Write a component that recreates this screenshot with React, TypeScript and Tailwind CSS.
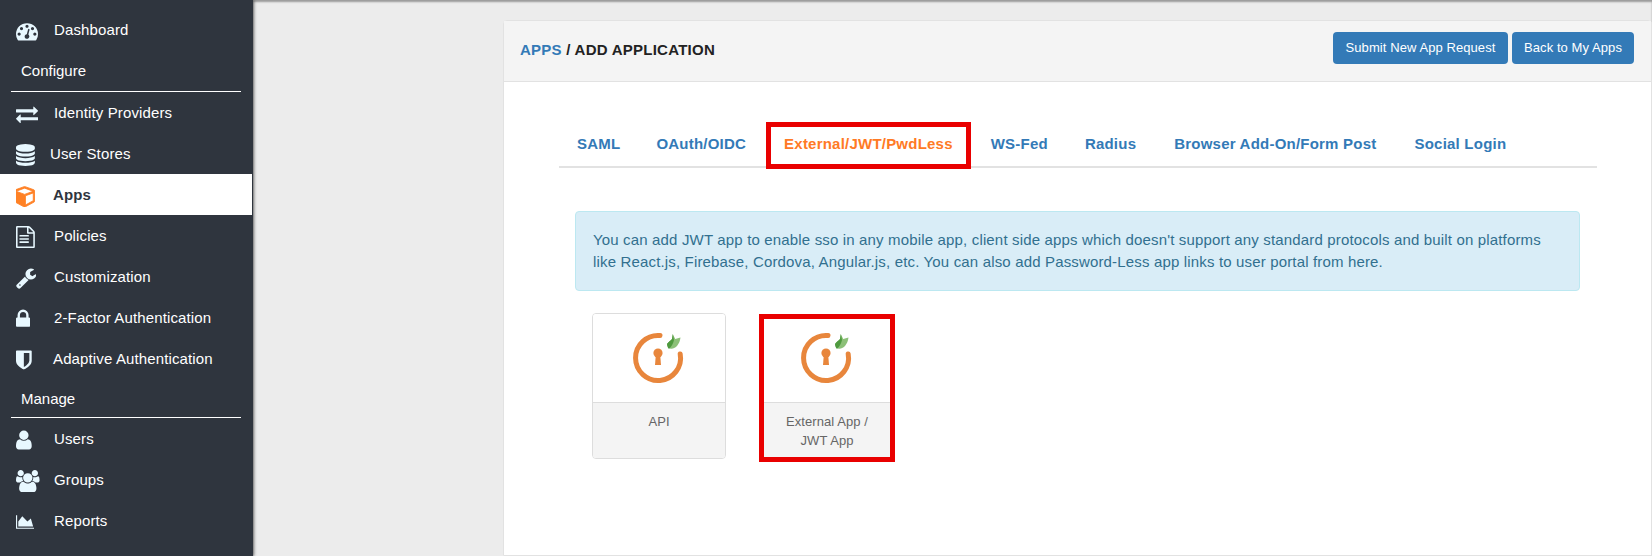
const icons = {
  dashboard: "M384 1152q0-53-37.500-90.500t-90.500-37.500-90.500 37.500-37.500 90.500 37.500 90.500 90.500 37.500 90.500-37.500 37.500-90.500zm192-448q0-53-37.500-90.500t-90.500-37.500-90.500 37.500-37.500 90.500 37.500 90.500 90.500 37.500 90.500-37.500 37.500-90.500zm428 481l101-382q6-26-7.500-48.500t-38.500-29.500-48 6.500-30 39.500l-101 382q-60 5-107 43.500t-63 98.500q-20 77 20 146t117 89 146-20 89-117q16-60-6-117t-72-91zm660-33q0-53-37.500-90.500t-90.500-37.500-90.500 37.500-37.500 90.500 37.500 90.500 90.500 37.500 90.500-37.500 37.500-90.500zm-640-640q0-53-37.500-90.500t-90.500-37.500-90.500 37.500-37.500 90.500 37.500 90.500 90.500 37.500 90.500-37.500 37.500-90.500zm448 192q0-53-37.500-90.500t-90.500-37.500-90.500 37.500-37.500 90.500 37.500 90.500 90.500 37.500 90.500-37.500 37.500-90.500zm320 448q0 261-141 483-19 29-54 29h-1402q-35 0-54-29-141-221-141-483 0-182 71-348t191-286 286-191 348-71 348 71 286 191 191 286 71 348z",
  exchange: "M1792 1184v192q0 13-9.500 22.500t-22.500 9.500h-1376v192q0 13-9.500 22.500t-22.500 9.500q-12 0-24-10l-319-320q-9-9-9-22 0-14 9-23l320-320q9-9 23-9 13 0 22.500 9.500t9.500 22.500v192h1376q13 0 22.500 9.500t9.500 22.500zm0-544q0 14-9 23l-320 320q-9 9-23 9-13 0-22.500-9.500t-9.500-22.500v-192h-1376q-13 0-22.500-9.500t-9.500-22.500v-192q0-13 9.500-22.500t22.500-9.500h1376v-192q0-14 9-23t23-9q12 0 24 10l319 319q9 9 9 23z",
  database: "M896 768q237 0 443-43t325-127v170q0 69-103 128t-280 93.500-385 34.500-385-34.500-280-93.500-103-128v-170q119 84 325 127t443 43zm0 768q237 0 443-43t325-127v170q0 69-103 128t-280 93.500-385 34.500-385-34.500-280-93.500-103-128v-170q119 84 325 127t443 43zm0-384q237 0 443-43t325-127v170q0 69-103 128t-280 93.500-385 34.500-385-34.500-280-93.500-103-128v-170q119 84 325 127t443 43zm0-1152q208 0 385 34.500t280 93.500 103 128v128q0 69-103 128t-280 93.500-385 34.500-385-34.500-280-93.500-103-128v-128q0-69 103-128t280-93.500 385-34.500z",
  cube: "M896 1629l640-349v-636l-640 233v752zm-64-865l698-254-698-254-698 254zm832-252v768q0 35-18 65t-49 47l-704 384q-28 16-61 16t-61-16l-704-384q-31-17-49-47t-18-65v-768q0-40 23-73t61-49l704-256q22-8 44-8t44 8l704 256q38 16 61 49t23 73z",
  file: "M1596 380q28 28 48 76t20 88v1152q0 40-28 68t-68 28h-1344q-40 0-68-28t-28-68v-1600q0-40 28-68t68-28h896q40 0 88 20t76 48zm-444-244v376h376q-10-29-22-41l-313-313q-12-12-41-22zm384 1528v-1024h-416q-40 0-68-28t-28-68v-416h-768v1536h1280zm-1128-896q0-14 9-23t23-9h704q14 0 23 9t9 23v64q0 14-9 23t-23 9h-704q-14 0-23-9t-9-23v-64zm736 224q14 0 23 9t9 23v64q0 14-9 23t-23 9h-704q-14 0-23-9t-9-23v-64q0-14 9-23t23-9h704zm0 256q14 0 23 9t9 23v64q0 14-9 23t-23 9h-704q-14 0-23-9t-9-23v-64q0-14 9-23t23-9h704z",
  wrench: "M448 1472q0-26-19-45t-45-19-45 19-19 45 19 45 45 19 45-19 19-45zm644-420l-682 682q-37 37-90 37-52 0-91-37l-106-108q-38-36-38-90 0-53 38-91l681-681q39 98 114.500 173.500t173.500 114.500zm634-435q0 39-23 106-47 134-164.500 217.500t-258.500 83.500q-185 0-316.500-131.500t-131.500-316.500 131.500-316.500 316.500-131.500q58 0 121.500 16.500t107.500 46.500q16 11 16 28t-16 28l-293 169v224l193 107q5-3 79-48.500t135.500-81 70.500-35.500q15 0 23.500 10t8.500 25z",
  lock: "M640 768h512v-192q0-106-75-181t-181-75-181 75-75 181v192zm832 96v576q0 40-28 68t-68 28h-960q-40 0-68-28t-28-68v-576q0-40 28-68t68-28h32v-192q0-184 132-316t316-132 316 132 132 316v192h32q40 0 68 28t28 68z",
  shield: "M1344 960v-640h-448v1137q119-63 213-137 235-184 235-360zm192-768v768q0 86-33.500 170.500t-83 150-118 127.500-126.500 103-121 77.500-89.500 49.500-42.500 20q-12 6-26 6t-26-6q-16-7-42.500-20t-89.500-49.500-121-77.500-126.500-103-118-127.500-83-150-33.500-170.500v-768q0-26 19-45t45-19h1152q26 0 45 19t19 45z",
  user: "M1536 1399q0 109-62.500 187t-150.500 78h-854q-88 0-150.500-78t-62.500-187q0-85 8.500-160.500t31.500-152 58.500-131 94-89 134.500-34.500q131 128 313 128t313-128q76 0 134.500 34.500t94 89 58.500 131 31.500 152 8.500 160.500zm-256-887q0 159-112.500 271.500t-271.500 112.500-271.500-112.500-112.500-271.500 112.500-271.500 271.500-112.500 271.500 112.500 112.500 271.500z",
  users: "M593 896q-162 5-265 128h-134q-82 0-138-40.500t-56-118.500q0-353 124-353 6 0 43.500 21t97.500 42.500 119 21.500q67 0 133-23-5 37-5 66 0 139 81 256zm1071 637q0 120-73 189.500t-194 69.500h-874q-121 0-194-69.500t-73-189.500q0-53 3.500-103.500t14-109 26.500-108.500 43-97.500 62-81 85.500-53.500 111.500-20q10 0 43 21.500t73 48 107 48 135 21.500 135-21.500 107-48 73-48 43-21.500q61 0 111.500 20t85.500 53.500 62 81 43 97.500 26.500 108.500 14 109 3.500 103.500zm-1024-1277q0 106-75 181t-181 75-181-75-75-181 75-181 181-75 181 75 75 181zm704 384q0 159-112.500 271.500t-271.500 112.500-271.500-112.500-112.500-271.500 112.500-271.500 271.500-112.500 271.500 112.500 112.500 271.500zm576 225q0 78-56 118.500t-138 40.500h-134q-103-123-265-128 81-117 81-256 0-29-5-66 66 23 133 23 59 0 119-21.500t97.500-42.500 43.500-21q124 0 124 353zm-128-609q0 106-75 181t-181 75-181-75-75-181 75-181 181-75 181 75 75 181z",
  area: "M2048 1536v128h-2048v-1536h128v1408h1920zm-384-1024l256 896h-1664v-576l448-576 576 576z",
  bars: "M640 896v512h-256v-512h256zm384-512v1024h-256v-1024h256zm1024 1152v128h-2048v-1536h128v1408h1920zm-640-896v768h-256v-768h256zm384-384v1152h-256v-1152h256z",
};

function Glyph({ d, view, className = "h-[22px] text-[#e8f8ff]" }: { d: string; view: string; className?: string }) {
  return (
    <svg viewBox={view} className={`w-auto ${className}`} fill="currentColor">
      <path d={d} />
    </svg>
  );
}

function NavItem({ d, view, label, active, iconClass, labelClass = "ml-[54px]" }: { d: string; view: string; label?: string; active?: boolean; iconClass?: string; labelClass?: string }) {
  return (
    <div className={`relative flex h-[41px] w-[252px] items-center pt-[2px] text-[15px] tracking-[0.13px] ${active ? "bg-white font-bold text-[#2f353e]" : "text-white"}`}>
      <span className="absolute left-4">
        <Glyph d={d} view={view} className={iconClass} />
      </span>
      {label && <span className={labelClass}>{label}</span>}
    </div>
  );
}

function Sidebar() {
  return (
    <aside className="h-[556px] w-[253px] shrink-0 overflow-hidden bg-[#2f353e] pt-[9px] shadow-[1px_0_3px_rgba(0,0,0,0.5)]">
      <NavItem d={icons.dashboard} view="0 0 1792 1792" label="Dashboard" />
      <div className="pt-[11px]">
        <div className="ml-[21px] text-[15px] leading-[20px] text-white">Configure</div>
        <div className="ml-[11px] mt-[10px] h-px w-[230px] bg-white" />
      </div>
      <NavItem d={icons.exchange} view="0 0 1792 1792" label="Identity Providers" />
      <NavItem d={icons.database} view="128 0 1536 1792" label="User Stores" labelClass="ml-[50px]" />
      <NavItem d={icons.cube} view="128 0 1536 1792" iconClass="h-[22px] stroke-current stroke-[70px] text-[#ff8125]" label="Apps" active labelClass="ml-[53px]" />
      <NavItem d={icons.file} view="128 0 1536 1792" label="Policies" />
      <NavItem d={icons.wrench} view="64 0 1664 1792" label="Customization" />
      <NavItem d={icons.lock} view="320 0 1152 1792" label="2-Factor Authentication" />
      <NavItem d={icons.shield} view="256 0 1280 1792" label="Adaptive Authentication" labelClass="ml-[53px]" />
      <div className="pt-[10px]">
        <div className="ml-[21px] text-[15px] leading-[20px] text-white">Manage</div>
        <div className="ml-[11px] mt-[8px] h-px w-[230px] bg-white" />
      </div>
      <NavItem d={icons.user} view="256 0 1280 1792" label="Users" />
      <NavItem d={icons.users} view="0 0 1920 1792" label="Groups" />
      <NavItem d={icons.area} view="0 0 2048 1792" iconClass="h-[16px] text-[#e8f8ff]" label="Reports" />
      <NavItem d={icons.bars} view="0 0 2048 1792" iconClass="h-[16px] text-[#e8f8ff]" />
    </aside>
  );
}

const tabs = [
  { label: "SAML", pad: "px-[18px]" },
  { label: "OAuth/OIDC", pad: "px-[18px]" },
  { label: "External/JWT/PwdLess", pad: "" },
  { label: "WS-Fed", pad: "pl-[19px] pr-[18px]" },
  { label: "Radius", pad: "px-[19px]" },
  { label: "Browser Add-On/Form Post", pad: "px-[19px]" },
  { label: "Social Login", pad: "px-[19px]" },
];

function Tabs() {
  return (
    <div className="ml-[55px] mr-[54px] flex h-[46px] items-end border-b-2 border-[#e2e2e2]">
      {tabs.map((tab) =>
        tab.label === "External/JWT/PwdLess" ? (
          <div key={tab.label} className="-mb-[3px] ml-[2px] mr-[1px] box-border flex h-[47px] items-center border-[5px] border-[#e90000] bg-white px-[13px] pb-[3px] text-[15px] font-bold tracking-[0.22px] text-[#ff7a25]">
            {tab.label}
          </div>
        ) : (
          <div key={tab.label} className={`flex h-[44px] items-center text-[15px] font-bold tracking-[0.22px] text-[#337ab7] ${tab.pad}`}>
            {tab.label}
          </div>
        ),
      )}
    </div>
  );
}

function LogoMark() {
  return (
    <svg width="56" height="56" viewBox="0 0 56 56" fill="none">
      <path d="M30 5.600A22.500 22.500 0 1 0 50.200 24" stroke="#e8863c" strokeWidth="5" strokeLinecap="round" />
      <circle cx="28" cy="23" r="4.600" fill="#e8863c" />
      <path d="M25.800 25h4.400l.8 10h-6z" fill="#e8863c" />
      <path d="M37 14c1.500-2 3.500-3.500 5-5l.8-5 2.400 5 5.300-1.500c-.5 3.500-1.500 6-3.500 8.500-2.500 2.500-5 3.200-7 2.500-1.800-.8-2.800-2.500-3-4.500z" fill="#8cc078" />
      <path d="M37 14c1.500-2 3.500-3.500 5-5l.8-5 1.200 6c-.5 3-2.500 6.500-5 9-1.200-1-1.800-3-2-5z" fill="#4f9a3f" />
    </svg>
  );
}

function AppCard({ lines, marked }: { lines: string[]; marked?: boolean }) {
  return (
    <div className={marked ? "mt-px box-border flex h-[148px] w-[136px] flex-col border-[5px] border-[#e90000]" : "box-border flex h-[146px] w-[134px] flex-col overflow-hidden rounded-[4px] border border-[#dddddd]"}>
      <div className={marked ? "flex h-[84px] justify-center border-b border-[#dddddd] bg-white pr-[2px] pt-[11px]" : "flex h-[89px] justify-center border-b border-[#dddddd] bg-white pr-[2px] pt-[16px]"}>
        <LogoMark />
      </div>
      <div className="flex-1 bg-[#f4f4f4] px-2 pt-[9px] text-center text-[13px] leading-[19px] tracking-[0.08px] text-[#666666]">
        {lines.map((line) => (
          <div key={line}>{line}</div>
        ))}
      </div>
    </div>
  );
}

export default function App() {
  return (
    <div className="flex h-[556px] w-[1652px] overflow-hidden bg-[#ececec] font-['Liberation_Sans',Arial,sans-serif] text-[14px]">
      <Sidebar />
      <main className="flex-1 pl-[250px] pt-[20px] shadow-[inset_0_2px_2px_rgba(0,0,0,0.35)]">
        <div className="h-[536px] rounded-t-[4px] border border-[#e2e2e2] bg-white">
          <div className="flex h-[61px] justify-between border-b border-[#e2e2e2] bg-[#f4f4f4] pl-[16px] pr-[17px]">
            <div className="pt-[19px] text-[15px] font-bold leading-[20px] tracking-[0.25px] text-[#222222]">
              <span className="text-[#337ab7]">APPS</span> / ADD APPLICATION
            </div>
            <div className="mt-[11px] flex gap-[4px]">
              <button className="h-[32px] w-[175px] rounded-[4px] bg-[#337ab7] text-[13px] tracking-[0.08px] text-white">Submit New App Request</button>
              <button className="h-[32px] w-[122px] rounded-[4px] bg-[#337ab7] text-[13px] tracking-[0.08px] text-white">Back to My Apps</button>
            </div>
          </div>
          <div className="pt-[40px]">
            <Tabs />
            <div className="ml-[71px] mr-[71px] mt-[43px] h-[80px] rounded-[4px] border border-[#bce8f1] bg-[#d9edf7] px-[17px] pt-[17px] text-[15px] leading-[22px] tracking-[0.16px] text-[#31708f]">
              You can add JWT app to enable sso in any mobile app, client side apps which doesn't support any standard protocols and built on platforms like React.js, Firebase, Cordova, Angular.js, etc. You can also add Password-Less app links to user portal from here.
            </div>
            <div className="ml-[88px] mt-[22px] flex items-start gap-[33px]">
              <AppCard lines={["API"]} />
              <AppCard lines={["External App /", "JWT App"]} marked />
            </div>
          </div>
        </div>
      </main>
    </div>
  );
}
